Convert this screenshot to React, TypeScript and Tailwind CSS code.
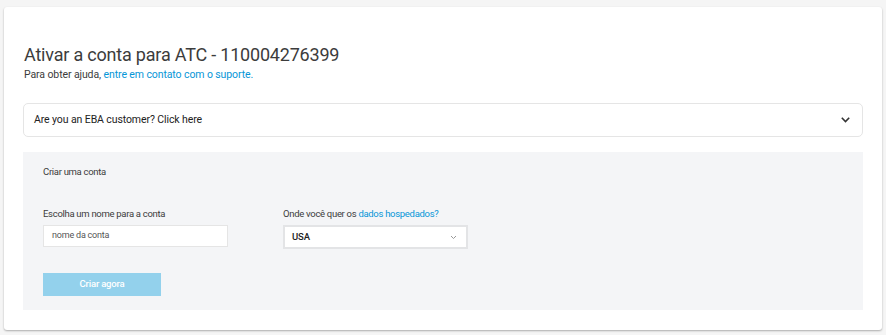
import React from "react";

export default function App() {
  const font = { fontFamily: "Roboto, 'Noto Sans', sans-serif" };
  return (
    <div className="w-[886px] h-[335px] bg-[#f5f5f5] pt-[7px] pl-[4px]" style={font}>
      <div className="w-[878px] h-[323px] bg-white rounded-[3px] shadow-[0_1px_2px_rgba(0,0,0,0.3)] px-[19px] pt-[36px]">
        <h1 className="text-[18px] leading-[24px] tracking-[-0.2px] text-[#3c3c3c] font-normal pl-[1px]">
          Ativar a conta para ATC - 110004276399
        </h1>
        <p className="text-[10.5px] leading-[14px] tracking-[-0.1px] text-[#3c3c3c] mt-[1px] pl-[1px]">
          Para obter ajuda, <span className="text-[#0696d7]">entre em contato com o suporte.</span>
        </p>
        <div className="mt-[21px] h-[34px] border border-[#e5e5e5] rounded-[5px] flex items-center justify-between pl-[10px] pr-[12px]">
          <span className="text-[10.5px] tracking-[-0.1px] text-[#222]">Are you an EBA customer? Click here</span>
          <svg width="9" height="6" viewBox="0 0 9 6" fill="none">
            <path d="M0.8 0.8 L4.5 4.6 L8.2 0.8" stroke="#333" strokeWidth="1.6" />
          </svg>
        </div>
        <div className="mt-[15px] h-[158px] bg-[#f4f5f7] pl-[20px] pt-[13px]">
          <div className="text-[9.5px] tracking-[-0.3px] text-[#3c3c3c] leading-[14px]">Criar uma conta</div>
          <div className="flex mt-[28px] gap-[55px]">
            <div className="flex flex-col">
              <label className="text-[9.5px] tracking-[-0.3px] text-[#3c3c3c] leading-[14px]">Escolha um nome para a conta</label>
              <div className="mt-[4px] w-[185px] h-[22px] bg-white border border-[#e5e5e5] flex items-center pl-[8px] text-[9px] tracking-[-0.2px] text-[#555]">
                nome da conta
              </div>
            </div>
            <div className="flex flex-col">
              <label className="text-[9.5px] tracking-[-0.3px] text-[#3c3c3c] leading-[14px]">
                Onde você quer os <span className="text-[#0696d7]">dados hospedados?</span>
              </label>
              <div className="mt-[4px] w-[185px] h-[24px] bg-white border-2 border-[#e3e4e6] flex items-center justify-between pl-[7px] pr-[9px]">
                <span className="text-[9.5px] tracking-[-0.1px] text-[#222] font-medium">USA</span>
                <svg width="7" height="5" viewBox="0 0 7 5" fill="none">
                  <path d="M1 1 L3.5 3.5 L6 1" stroke="#999" strokeWidth="1" />
                </svg>
              </div>
            </div>
          </div>
          <button className="mt-[24px] w-[118px] h-[23px] bg-[#93d1ec] text-white text-[9.5px] tracking-[-0.2px] font-medium">
            Criar agora
          </button>
        </div>
      </div>
    </div>
  );
}
